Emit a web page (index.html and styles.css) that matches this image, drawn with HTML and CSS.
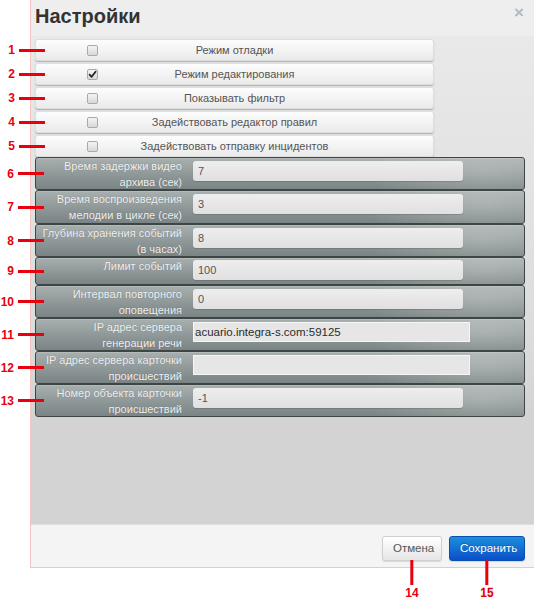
FILE: index.html
```html
<!DOCTYPE html>
<html lang="ru">
<head>
<meta charset="utf-8">
<title>Настройки</title>
<link rel="stylesheet" href="styles.css">
</head>
<body>
<div class="page">
  <div class="dialog">
    <div class="header">
      <h1 class="title">Настройки</h1>
      <span class="close">×</span>
    </div>
    <div class="body">
      <div class="checks">
        <div class="crow"><span class="mark"><b>1</b><i></i></span><span class="cb"></span><span class="clabel">Режим отладки</span></div>
        <div class="crow"><span class="mark"><b>2</b><i></i></span><span class="cb checked"><svg viewBox="0 0 11 11" width="11" height="11"><path d="M2.6 5.6 L4.6 7.8 L8.6 2.8" fill="none" stroke="#222" stroke-width="1.8" stroke-linecap="round" stroke-linejoin="round"/></svg></span><span class="clabel">Режим редактирования</span></div>
        <div class="crow"><span class="mark"><b>3</b><i></i></span><span class="cb"></span><span class="clabel">Показывать фильтр</span></div>
        <div class="crow"><span class="mark"><b>4</b><i></i></span><span class="cb"></span><span class="clabel">Задействовать редактор правил</span></div>
        <div class="crow"><span class="mark"><b>5</b><i></i></span><span class="cb"></span><span class="clabel">Задействовать отправку инцидентов</span></div>
      </div>
      <div class="fields">
        <div class="frow"><span class="mark"><b>6</b><i></i></span><span class="flabel">Время задержки видео<br>архива (сек)</span><span class="inp">7</span></div>
        <div class="frow tall"><span class="mark"><b>7</b><i></i></span><span class="flabel">Время воспроизведения<br>мелодии в цикле (сек)</span><span class="inp">3</span></div>
        <div class="frow"><span class="mark"><b>8</b><i></i></span><span class="flabel">Глубина хранения событий<br>(в часах)</span><span class="inp">8</span></div>
        <div class="frow single"><span class="mark"><b>9</b><i></i></span><span class="flabel">Лимит событий</span><span class="inp">100</span></div>
        <div class="frow"><span class="mark"><b>10</b><i></i></span><span class="flabel">Интервал повторного<br>оповещения</span><span class="inp">0</span></div>
        <div class="frow"><span class="mark"><b>11</b><i></i></span><span class="flabel">IP адрес сервера<br>генерации речи</span><span class="inp text">acuario.integra-s.com:59125</span></div>
        <div class="frow"><span class="mark"><b>12</b><i></i></span><span class="flabel">IP адрес сервера карточки<br>происшествий</span><span class="inp text"></span></div>
        <div class="frow"><span class="mark"><b>13</b><i></i></span><span class="flabel">Номер объекта карточки<br>происшествий</span><span class="inp">-1</span></div>
      </div>
    </div>
    <div class="footer">
      <span class="btn">Отмена<span class="vmark"><i></i><b>14</b></span></span>
      <span class="btn primary">Сохранить<span class="vmark"><i></i><b>15</b></span></span>
    </div>
  </div>
</div>
</body>
</html>
```

FILE: styles.css
```css
html, body {
  margin: 0;
  padding: 0;
  background: #fff;
}
body {
  font-family: "Liberation Sans", Arial, sans-serif;
  width: 534px;
  height: 599px;
  overflow: hidden;
}
.page {
  width: 534px;
  height: 599px;
  padding-left: 30px;
  box-sizing: border-box;
}
.dialog {
  width: 504px;
  height: 568px;
  border-left: 1px solid #f3c4c4;
  border-bottom: 1px solid #f3c4c4;
  box-sizing: border-box;
  display: flex;
  flex-direction: column;
  background: #ececec;
}
.header {
  height: 36px;
  flex: none;
  display: flex;
  align-items: flex-start;
  justify-content: space-between;
  padding: 0 10px 0 4px;
  background: #eeeeee;
}
.title {
  margin: 4px 0 0;
  font-size: 20px;
  font-weight: bold;
  color: #333;
  line-height: 24px;
}
.close {
  margin-top: 5px;
  font-size: 17px;
  font-weight: bold;
  color: #b8b8b8;
  line-height: 16px;
}
.body {
  flex: 1;
  padding: 3px 0 0 4px;
  background: linear-gradient(#e9e9e9 0px, #dcdcdc 300px, #d3d3d3 381px, #d3d3d3 100%);
}
.checks {
  display: flex;
  flex-direction: column;
  gap: 2px;
  width: 399px;
}
.crow {
  position: relative;
  height: 22px;
  box-sizing: border-box;
  display: flex;
  align-items: center;
  border-radius: 3px;
  background: linear-gradient(#fdfdfd, #eaeaea);
  box-shadow: 0 1px 1px rgba(0,0,0,0.25);
  border: 1px solid #dedede;
}
.cb {
  width: 11px;
  height: 11px;
  margin-left: 51px;
  box-sizing: border-box;
  border: 1px solid #a9a9a9;
  border-radius: 2px;
  background: linear-gradient(#f4f4f4, #d8d8d8);
  flex: none;
  display: flex;
}
.cb svg {
  margin: -1px;
}
.clabel {
  flex: 1;
  text-align: center;
  margin-right: 62px;
  font-size: 11px;
  color: #555;
}
.fields {
  display: flex;
  flex-direction: column;
  width: 490px;
}
.frow {
  position: relative;
  height: 33px;
  box-sizing: border-box;
  display: flex;
  align-items: flex-start;
  border: 1px solid #3e4545;
  border-radius: 3px;
  background:
    radial-gradient(ellipse 120px 40px at 92% 45%, rgba(255,255,255,0.22), rgba(255,255,255,0) 100%),
    linear-gradient(#a8afaf, #8c9595 60%, #7b8484);
  box-shadow: inset 0 1px 0 rgba(255,255,255,0.15);
}
.frow.tall { height: 34px; }
.frow.single { height: 28px; }
.flabel {
  width: 146px;
  flex: none;
  text-align: right;
  color: #f0f0f0;
  font-size: 11px;
  line-height: 16px;
  text-shadow: 0 0 1px rgba(0,0,0,0.25);
  white-space: nowrap;
}
.inp {
  margin: 3px 0 0 11px;
  width: 270px;
  height: 20px;
  box-sizing: border-box;
  border-radius: 3px;
  background: linear-gradient(#eeeeee, #e0e0e0);
  box-shadow: 0 1px 1px rgba(0,0,0,0.15);
  font-size: 11px;
  color: #555;
  line-height: 20px;
  padding-left: 5px;
}
.single .inp { margin-top: 2px; }
.inp.text {
  width: 277px;
  border-radius: 0;
  border: 1px solid #f6f6f6;
  background: #e6e6e6;
  box-shadow: none;
  font-size: 11.5px;
  color: #2a2a2a;
  line-height: 18px;
  padding-left: 1px;
}
.mark {
  position: absolute;
  right: calc(100% - 9px);
  top: 50%;
  transform: translateY(-50%);
  display: flex;
  align-items: center;
  gap: 4px;
}
.frow .mark { right: calc(100% - 8px); }
.mark b {
  color: #e8000b;
  font-size: 12px;
  font-weight: bold;
  line-height: 12px;
}
.mark i {
  display: block;
  width: 26px;
  height: 3px;
  background: #e8000b;
}
.footer {
  height: 43px;
  flex: none;
  box-sizing: border-box;
  border-top: 1px solid #dedede;
  background: #f4f4f4;
  display: flex;
  justify-content: flex-end;
  align-items: flex-start;
  gap: 7px;
  padding: 11px 9px 0 0;
}
.btn {
  position: relative;
  height: 25px;
  box-sizing: border-box;
  padding: 0 10px;
  border-radius: 3px;
  border: 1px solid #cfcfcf;
  background: linear-gradient(#ffffff, #e6e6e6);
  box-shadow: 0 1px 1px rgba(0,0,0,0.12);
  font-size: 11.5px;
  line-height: 23px;
  color: #555;
  width: 60px;
  text-align: center;
}
.btn.primary {
  width: 76px;
  border-color: #0a4fb0;
  background: linear-gradient(#1c8fdc, #0a4fc9);
  color: #fff;
  text-shadow: 0 -1px 0 rgba(0,0,0,0.2);
}
.vmark {
  position: absolute;
  top: 100%;
  left: 50%;
  transform: translateX(-50%);
  display: flex;
  flex-direction: column;
  align-items: center;
}
.vmark i {
  display: block;
  width: 3px;
  height: 25px;
  background: #e8000b;
}
.vmark b {
  color: #e8000b;
  font-size: 12px;
  font-weight: bold;
  line-height: 12px;
  margin-top: 2px;
}
```
